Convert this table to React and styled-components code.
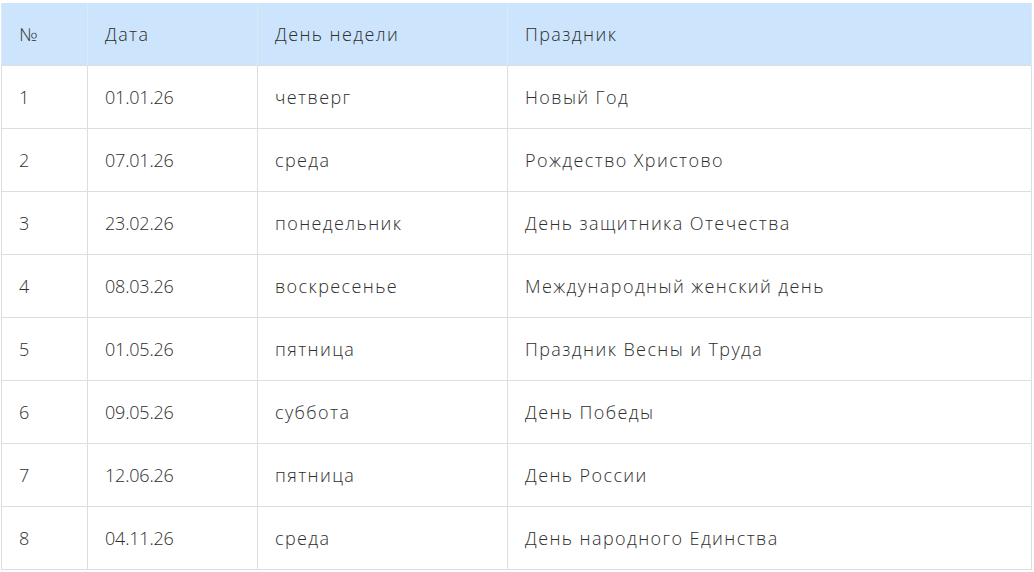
import React from "react";
import styled, { createGlobalStyle } from "styled-components";

const holidays = [
  { date: "01.01.26", day: "четверг", name: "Новый Год" },
  { date: "07.01.26", day: "среда", name: "Рождество Христово" },
  { date: "23.02.26", day: "понедельник", name: "День защитника Отечества" },
  { date: "08.03.26", day: "воскресенье", name: "Международный женский день" },
  { date: "01.05.26", day: "пятница", name: "Праздник Весны и Труда" },
  { date: "09.05.26", day: "суббота", name: "День Победы" },
  { date: "12.06.26", day: "пятница", name: "День России" },
  { date: "04.11.26", day: "среда", name: "День народного Единства" },
];

const GlobalStyle = createGlobalStyle`
  body {
    margin: 0;
    background: #fff;
    font-family: "Open Sans", "Noto Sans", sans-serif;
  }
`;

const Page = styled.div`
  padding: 3px 2px 0 1px;
`;

const Table = styled.table`
  width: 1031px;
  border-collapse: collapse;
  table-layout: fixed;
  font-size: 18px;
  font-weight: 300;
  color: #2e2e2e;
`;

const HeadCell = styled.th`
  height: 62.9px;
  padding: 0 17px;
  text-align: left;
  font-weight: 300;
  letter-spacing: ${(p) => (p.$num ? "-0.2px" : "1.4px")};
  background: #cce4fc;
  border-left: 1px solid #dbe9f7;
  border-right: 1px solid #dbe9f7;
  box-sizing: border-box;
`;

const Cell = styled.td`
  height: 62.9px;
  padding: 0 17px;
  letter-spacing: ${(p) => (p.$num ? "-0.2px" : "1.4px")};
  border: 1px solid #dedede;
  box-sizing: border-box;
`;

export default function App() {
  return (
    <Page>
      <GlobalStyle />
      <Table>
        <colgroup>
          <col style={{ width: 86 }} />
          <col style={{ width: 170 }} />
          <col style={{ width: 250 }} />
          <col />
        </colgroup>
        <thead>
          <tr>
            <HeadCell>№</HeadCell>
            <HeadCell>Дата</HeadCell>
            <HeadCell>День недели</HeadCell>
            <HeadCell>Праздник</HeadCell>
          </tr>
        </thead>
        <tbody>
          {holidays.map((h, i) => (
            <tr key={h.date}>
              <Cell $num>{i + 1}</Cell>
              <Cell $num>{h.date}</Cell>
              <Cell>{h.day}</Cell>
              <Cell>{h.name}</Cell>
            </tr>
          ))}
        </tbody>
      </Table>
    </Page>
  );
}
